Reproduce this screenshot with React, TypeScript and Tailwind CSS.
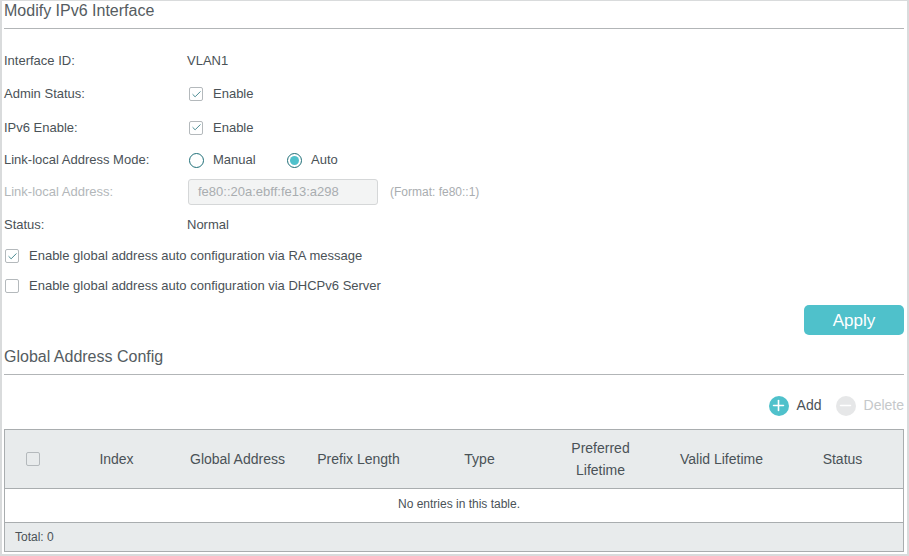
import { Check, Plus, Minus } from "lucide-react";

function CheckBox({ checked = false, className = "" }: { checked?: boolean; className?: string }) {
  return (
    <span className={`flex h-[14px] w-[14px] items-center justify-center rounded-[2px] border border-[#b4b9bc] ${className}`}>
      {checked && <Check className="h-[11px] w-[11px] text-[#1f6f78]" strokeWidth={1.75} />}
    </span>
  );
}

function Radio({ checked = false }: { checked?: boolean }) {
  return (
    <span className="flex h-[15px] w-[15px] items-center justify-center rounded-full border-[1.5px] border-[#1f6f78]">
      {checked && <span className="h-[9px] w-[9px] rounded-full bg-[#4fc1cb]" />}
    </span>
  );
}

function Row({ label, h, muted, children }: { label: string; h: string; muted?: boolean; children: React.ReactNode }) {
  return (
    <div className={`flex items-center ${h}`}>
      <span className={`w-[183px] shrink-0 ${muted ? "text-[#b3b7ba]" : ""}`}>{label}</span>
      {children}
    </div>
  );
}

const columns = ["Index", "Global Address", "Prefix Length", "Type", "Preferred Lifetime", "Valid Lifetime", "Status"];

export default function App() {
  return (
    <div
      className="h-[556px] w-[909px] overflow-hidden border-x-2 border-t border-b-2 border-[#d9dbdc] bg-white pl-[2px] pr-[3px] text-[13px] text-[#4a5257]"
      style={{ fontFamily: "'Liberation Sans', Arial, sans-serif" }}
    >
      {/* Modify section */}
      <div className="flex h-[28px] items-start border-b border-[#b2b5b7] text-[16px] leading-[20px] text-[#555c61]">
        Modify IPv6 Interface
      </div>

      <div className="pt-[15px]">
        <Row label="Interface ID:" h="h-[33px]">
          <span>VLAN1</span>
        </Row>
        <Row label="Admin Status:" h="h-[34px]">
          <CheckBox checked className="ml-[2px]" />
          <span className="ml-[10px]">Enable</span>
        </Row>
        <Row label="IPv6 Enable:" h="h-[33px]">
          <CheckBox checked className="ml-[2px]" />
          <span className="ml-[10px]">Enable</span>
        </Row>
        <Row label="Link-local Address Mode:" h="h-[32px]">
          <span className="ml-[2px]"><Radio /></span>
          <span className="ml-[9px] w-[74px]">Manual</span>
          <Radio checked />
          <span className="ml-[9px]">Auto</span>
        </Row>
        <Row label="Link-local Address:" h="h-[32px]" muted>
          <div className="ml-[1px] flex h-[26px] w-[190px] items-center rounded-[3px] border border-[#d5d7d8] bg-[#f3f4f4] pl-[9px] text-[#a9adb0]">
            fe80::20a:ebff:fe13:a298
          </div>
          <span className="ml-[12px] text-[12px] text-[#a9adb0]">(Format: fe80::1)</span>
        </Row>
        <Row label="Status:" h="h-[33px]">
          <span>Normal</span>
        </Row>
        <div className="flex h-[30px] items-center">
          <CheckBox checked className="ml-[1px]" />
          <span className="ml-[10px]">Enable global address auto configuration via RA message</span>
        </div>
        <div className="flex h-[30px] items-center">
          <CheckBox className="ml-[1px]" />
          <span className="ml-[10px]">Enable global address auto configuration via DHCPv6 Server</span>
        </div>
      </div>

      <div className="flex justify-end pt-[4px]">
        <button className="h-[30px] w-[100px] rounded-[5px] bg-[#4fc1cb] pt-[1px] text-[17px] font-medium text-white">Apply</button>
      </div>

      {/* Global address section */}
      <div className="mt-[12px] flex h-[28px] items-start border-b border-[#b2b5b7] text-[16px] leading-[20px] text-[#555c61]">
        Global Address Config
      </div>

      <div className="flex h-[54px] items-center justify-end pt-[7px] text-[14px]">
        <span className="flex h-[20px] w-[20px] items-center justify-center rounded-full bg-[#4fc1cb]">
          <Plus className="h-[17px] w-[17px] text-white" strokeWidth={2.25} />
        </span>
        <span className="ml-[8px] text-[#4a5257]">Add</span>
        <span className="ml-[14px] flex h-[20px] w-[20px] items-center justify-center rounded-full bg-[#e6e7e8]">
          <Minus className="h-[17px] w-[17px] text-white" strokeWidth={2.25} />
        </span>
        <span className="ml-[8px] text-[#c5c8ca]">Delete</span>
      </div>

      {/* Table */}
      <div className="border border-[#a9adaf]">
        <div className="grid h-[59px] grid-cols-[51px_repeat(7,121px)] items-center border-b border-[#a9adaf] bg-[#e8ebec] text-center text-[14px]">
          <CheckBox className="ml-[21px]" />
          {columns.map((c) => (
            <span key={c} className={c === "Preferred Lifetime" ? "mx-auto w-[70px] leading-[22px]" : ""}>
              {c}
            </span>
          ))}
        </div>
        <div className="flex h-[34px] items-center justify-center border-b border-[#a9adaf] pb-[4px] pl-[10px] text-[12px]">No entries in this table.</div>
        <div className="flex h-[28px] items-center bg-[#e8ebec] pl-[10px] text-[12px]">Total: 0</div>
      </div>
    </div>
  );
}
